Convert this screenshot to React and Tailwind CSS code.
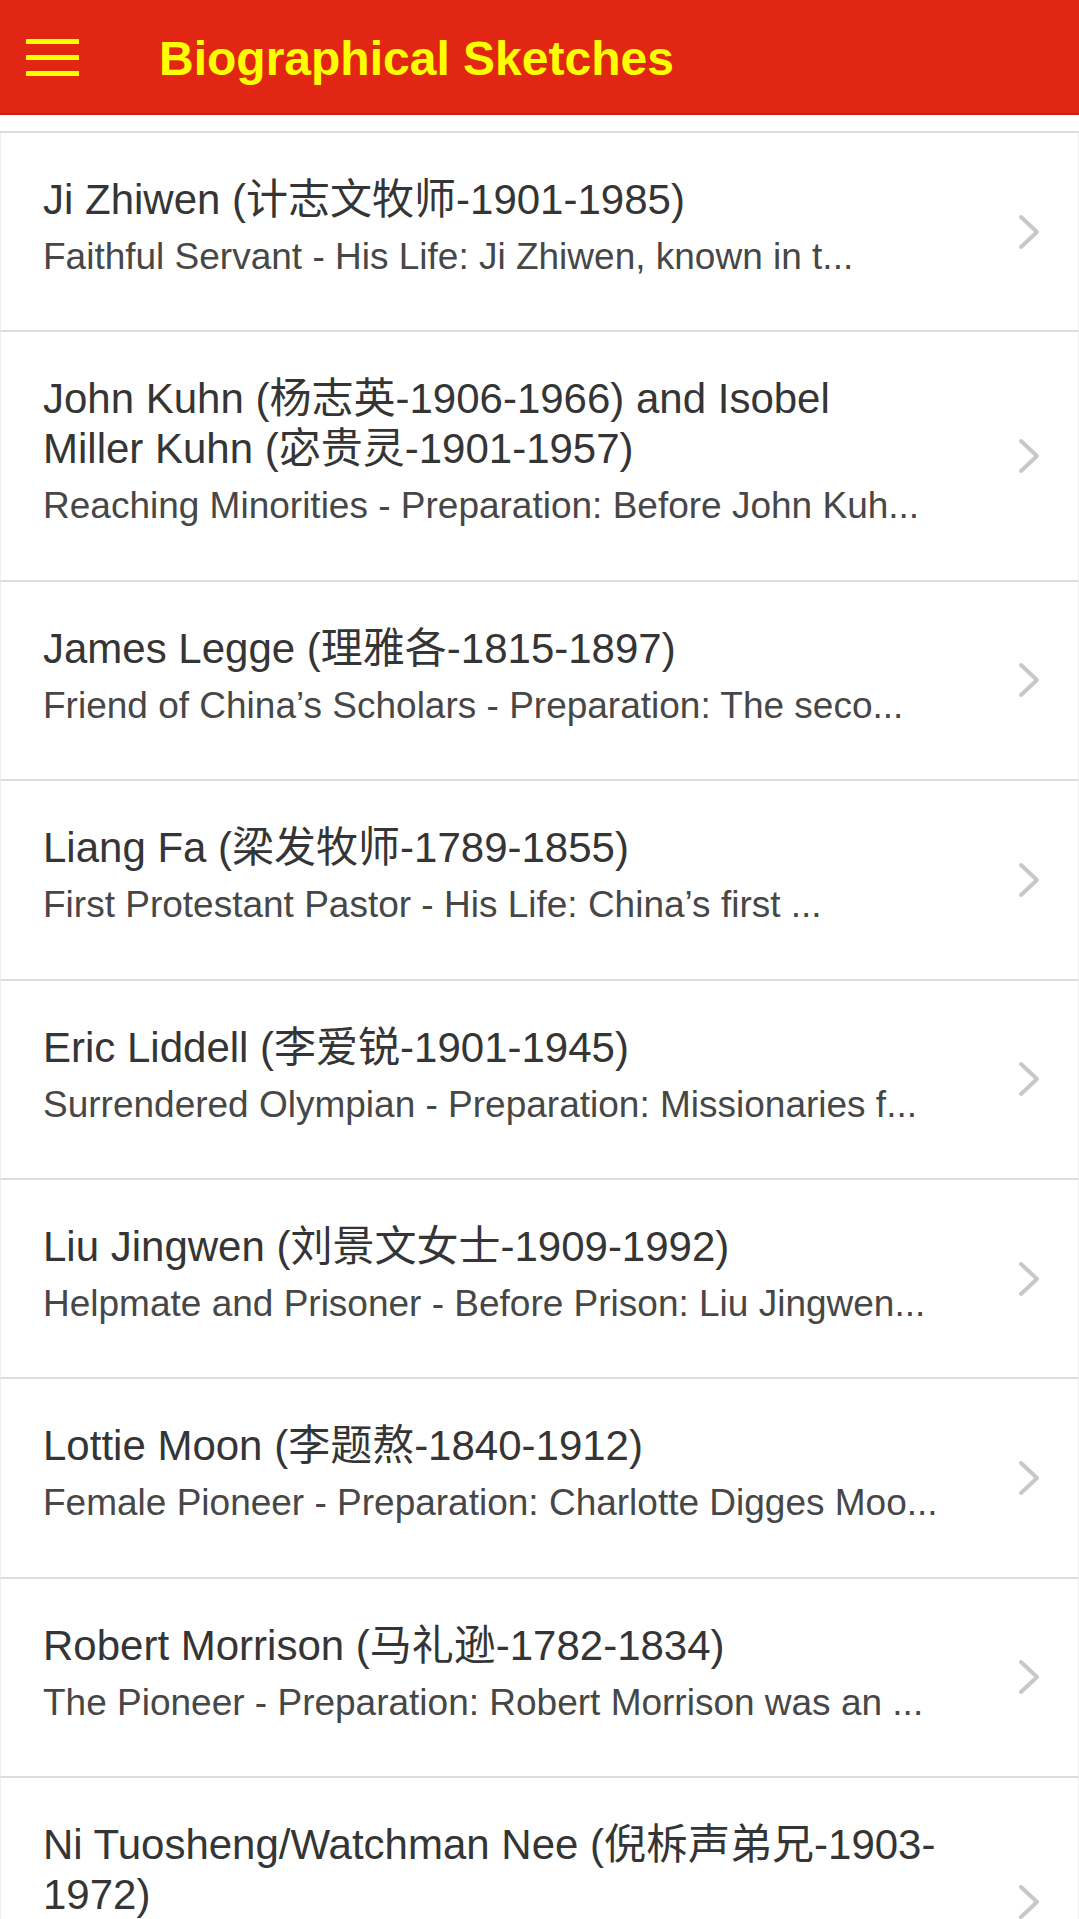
const sketches = [
  {
    id: 1,
    title: ["Ji Zhiwen (计志文牧师-1901-1985)"],
    summary: "Faithful Servant - His Life: Ji Zhiwen, known in t...",
  },
  {
    id: 2,
    title: ["John Kuhn (杨志英-1906-1966) and Isobel", "Miller Kuhn (宓贵灵-1901-1957)"],
    summary: "Reaching Minorities - Preparation: Before John Kuh...",
  },
  {
    id: 3,
    title: ["James Legge (理雅各-1815-1897)"],
    summary: "Friend of China’s Scholars - Preparation: The seco...",
  },
  {
    id: 4,
    title: ["Liang Fa (梁发牧师-1789-1855)"],
    summary: "First Protestant Pastor - His Life: China’s first ...",
  },
  {
    id: 5,
    title: ["Eric Liddell (李爱锐-1901-1945)"],
    summary: "Surrendered Olympian - Preparation: Missionaries f...",
  },
  {
    id: 6,
    title: ["Liu Jingwen (刘景文女士-1909-1992)"],
    summary: "Helpmate and Prisoner - Before Prison: Liu Jingwen...",
  },
  {
    id: 7,
    title: ["Lottie Moon (李题熬-1840-1912)"],
    summary: "Female Pioneer - Preparation: Charlotte Digges Moo...",
  },
  {
    id: 8,
    title: ["Robert Morrison (马礼逊-1782-1834)"],
    summary: "The Pioneer - Preparation: Robert Morrison was an ...",
  },
  {
    id: 9,
    title: ["Ni Tuosheng/Watchman Nee (倪柝声弟兄-1903-", "1972)"],
    summary: "Church Builder - Preparation: Ni Tuosheng was bor...",
  },
];

const font = {
  fontFamily: '"Liberation Sans", Arial, "Noto Sans CJK SC", sans-serif',
};

// iOS style disclosure arrow
const Chevron = () => (
  <svg
    width="22"
    height="36"
    viewBox="0 0 22 36"
    fill="none"
    className="shrink-0"
  >
    <polyline
      points="3,3 19,18 3,33"
      stroke="#c8c8cc"
      strokeWidth="4"
      strokeLinecap="round"
      strokeLinejoin="round"
    />
  </svg>
);

const App = () => {
  return (
    <div className="h-screen overflow-hidden bg-white" style={font}>

      {/* HEADER */}
      <div className="h-[115px] bg-[#e12614] border-b-2 border-[#c7221a] flex items-start">
        <button className="mt-[39px] ml-[26px] w-[53px] flex flex-col gap-[11px]">
          <span className="block h-[5px] bg-[#ffff00]"></span>
          <span className="block h-[5px] bg-[#ffff00]"></span>
          <span className="block h-[5px] bg-[#ffff00]"></span>
        </button>

        <h1 className="ml-[80px] mt-[35px] text-[48px] leading-[48px] font-bold text-[#ffff00] whitespace-nowrap">
          Biographical Sketches
        </h1>
      </div>

      {/* LIST */}
      <div className="pt-[16px]">
        <ul className="border-t-2 border-[#dddddd]">
          {sketches.map((s) => (
            <li
              key={s.id}
              className="flex items-center border-b-2 border-x border-[#dddddd] border-x-[#efefef] pl-[42px] pr-[38px]"
            >
              <div className="flex-1 min-w-0 pt-[42px] pb-[51.4px]">
                <h2 className="text-[42px] leading-[50px] text-[#353535] whitespace-nowrap">
                  {s.title.map((line, i) => (
                    <div key={i}>{line}</div>
                  ))}
                </h2>
                <p className="mt-[10px] text-[37px] leading-[44px] text-[#474747] whitespace-nowrap">
                  {s.summary}
                </p>
              </div>

              <Chevron />
            </li>
          ))}
        </ul>
      </div>

    </div>
  );
};

export default App;
